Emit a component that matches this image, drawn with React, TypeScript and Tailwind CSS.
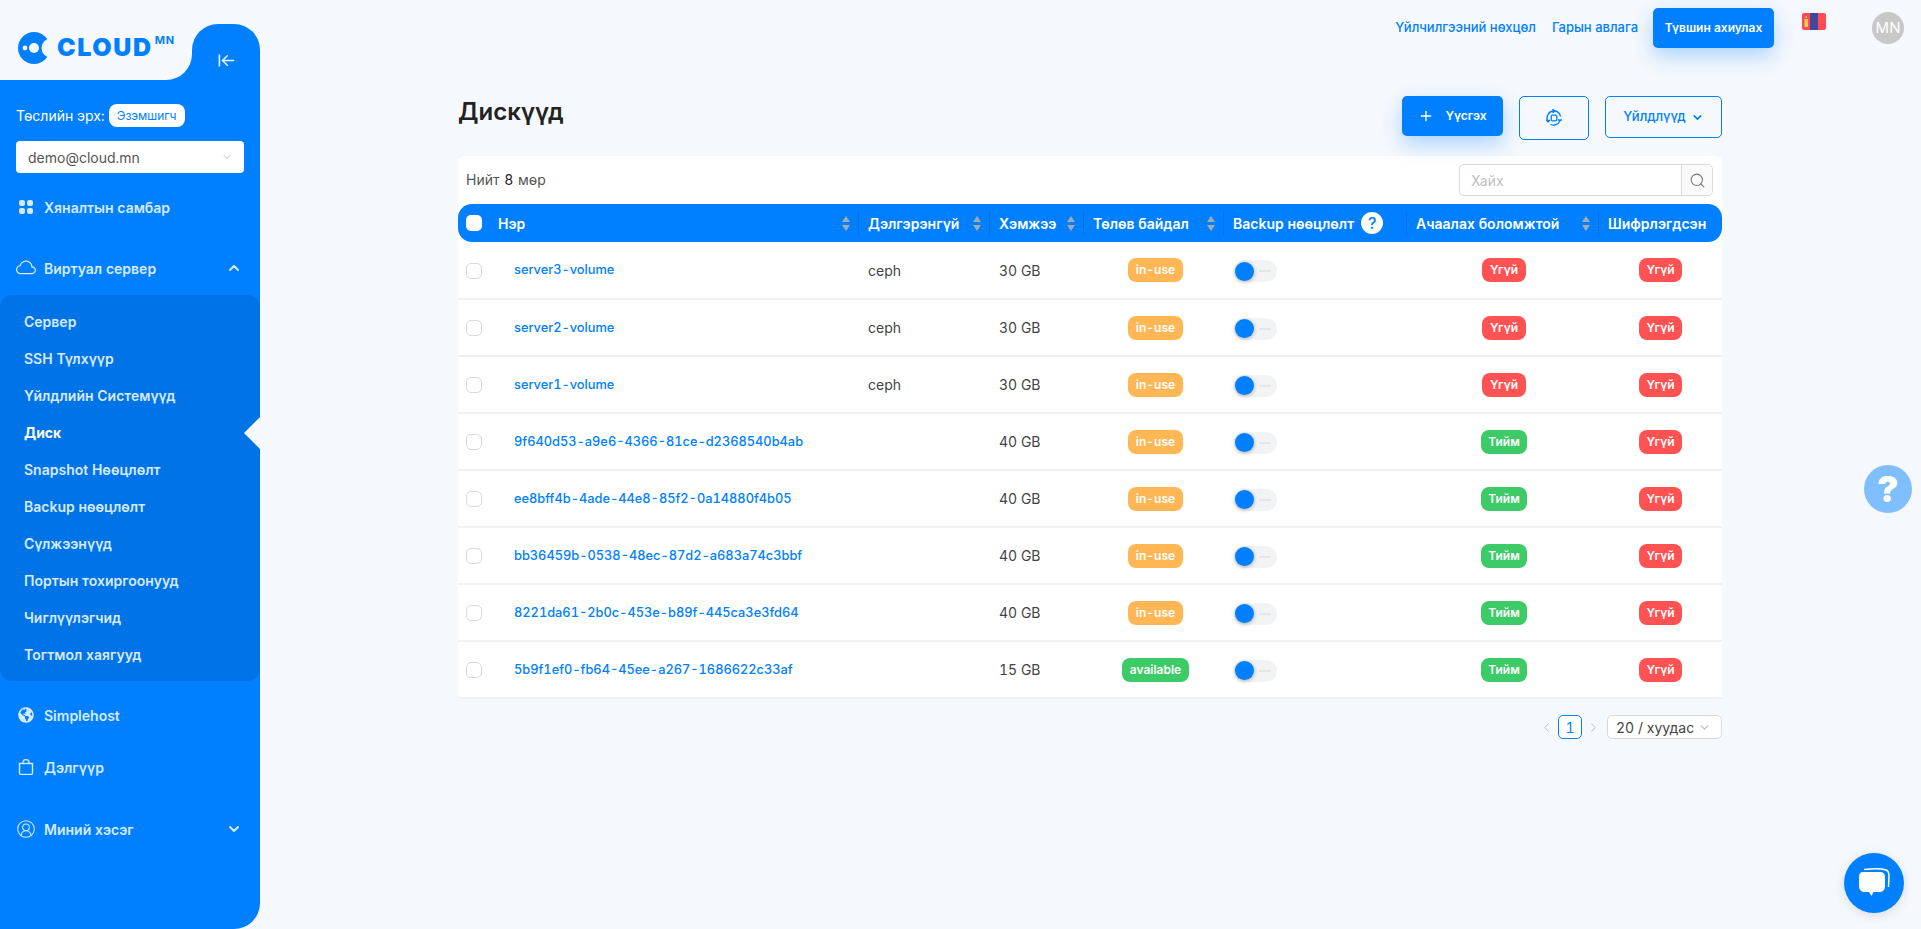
import { ArrowLeftToLine, ChevronDown, ChevronLeft, ChevronRight, ChevronUp, CircleUserRound, Plus, Search } from "lucide-react";
import { BsBag, BsCloud } from "react-icons/bs";
import { FaGlobeAmericas } from "react-icons/fa";

const subItems = [
  "Сервер",
  "SSH Түлхүүр",
  "Үйлдлийн Системүүд",
  "Диск",
  "Snapshot Нөөцлөлт",
  "Backup нөөцлөлт",
  "Сүлжээнүүд",
  "Портын тохиргоонууд",
  "Чиглүүлэгчид",
  "Тогтмол хаягууд",
];

const rows = [
  { name: "server3-volume", desc: "ceph", size: "30 GB", status: "in-use", boot: false },
  { name: "server2-volume", desc: "ceph", size: "30 GB", status: "in-use", boot: false },
  { name: "server1-volume", desc: "ceph", size: "30 GB", status: "in-use", boot: false },
  { name: "9f640d53-a9e6-4366-81ce-d2368540b4ab", desc: "", size: "40 GB", status: "in-use", boot: true },
  { name: "ee8bff4b-4ade-44e8-85f2-0a14880f4b05", desc: "", size: "40 GB", status: "in-use", boot: true },
  { name: "bb36459b-0538-48ec-87d2-a683a74c3bbf", desc: "", size: "40 GB", status: "in-use", boot: true },
  { name: "8221da61-2b0c-453e-b89f-445ca3e3fd64", desc: "", size: "40 GB", status: "in-use", boot: true },
  { name: "5b9f1ef0-fb64-45ee-a267-1686622c33af", desc: "", size: "15 GB", status: "available", boot: true },
];

function Logo() {
  return (
    <div className="flex items-start pl-[18px] pt-[8px]">
      <svg width="32" height="32" viewBox="0 0 32 32">
        <circle cx="16" cy="16" r="16" fill="#0080ff" />
        <circle cx="33" cy="16" r="9.5" fill="#f5f8fc" />
        <circle cx="16" cy="16" r="5" fill="#f5f8fc" />
        <circle cx="7" cy="16" r="2.4" fill="#f5f8fc" />
      </svg>
      <span className="ml-[7px] text-[25px] leading-[30px] font-black tracking-[1.6px] text-[#0080ff]">CLOUD</span>
      <span className="ml-[2px] mt-[2px] text-[11px] leading-[12px] font-bold tracking-[1px] text-[#0080ff]">MN</span>
    </div>
  );
}

function GridIcon() {
  return (
    <svg width="14" height="14" viewBox="0 0 14 14" fill="currentColor">
      <rect x="0" y="0" width="6" height="6" rx="2.2" />
      <rect x="8" y="0" width="6" height="6" rx="2.2" />
      <rect x="0" y="8" width="6" height="6" rx="2.2" />
      <rect x="8" y="8" width="6" height="6" rx="2.2" />
    </svg>
  );
}

function NavItem({ icon, label, chevron, className }: { icon: React.ReactNode; label: string; chevron?: "up" | "down"; className?: string }) {
  return (
    <div className={`flex h-[44px] items-center text-[14px] font-semibold text-[#d6eaff] ${className ?? ""}`}>
      <span className="flex w-[44px] justify-center pl-[16px] pr-[8px]">{icon}</span>
      <span className="flex-1">{label}</span>
      {chevron === "up" && <ChevronUp size={16} strokeWidth={3} className="mr-[18px]" />}
      {chevron === "down" && <ChevronDown size={16} strokeWidth={3} className="mr-[18px]" />}
    </div>
  );
}

function Sidebar() {
  return (
    <aside className="flex h-[929px] w-[260px] shrink-0 flex-col pt-[24px]">
      <div className="flex h-[56px]">
        <div className="w-[192px] bg-[#0080ff]">
          <div className="h-full rounded-br-[26px] bg-[#f5f8fc]">
            <Logo />
          </div>
        </div>
        <div className="flex w-[68px] justify-center rounded-t-[26px] bg-[#0080ff] pt-[27px] text-[#e6f2ff]">
          <ArrowLeftToLine size={19} strokeWidth={2} />
        </div>
      </div>
      <div className="flex flex-1 flex-col rounded-br-[26px] bg-[#0080ff]">
        <div className="mt-[24px] flex h-[23px] items-center pl-[16px] text-[14px] text-white">
          Төслийн эрх:
          <span className="ml-[4px] flex h-[23px] w-[76px] items-center justify-center rounded-[8px] bg-white text-[12px] text-[#0080ff]">Эзэмшигч</span>
        </div>
        <div className="mx-[16px] mt-[14px] flex h-[32px] items-center justify-between rounded-[4px] bg-white pl-[12px] pr-[11px] text-[14px] text-[#555]">
          demo@cloud.mn
          <ChevronDown size={12} className="text-[#bbb]" />
        </div>
        <NavItem className="mt-[12px]" icon={<GridIcon />} label="Хяналтын самбар" />
        <NavItem className="mt-[17px]" icon={<BsCloud size={20} />} label="Виртуал сервер" chevron="up" />
        <div className="relative mt-[5px] rounded-[12px] bg-[#0073e6] py-[8px]">
          {subItems.map((item) => (
            <div key={item} className={`flex h-[37px] items-center pl-[24px] text-[14px] ${item === "Диск" ? "font-bold text-white" : "font-semibold text-[#d6eaff]"}`}>
              {item}
            </div>
          ))}
          <div className="absolute right-0 top-[122px] h-0 w-0 border-y-[16px] border-r-[16px] border-y-transparent border-r-[#f5f8fc]" />
        </div>
        <NavItem className="mt-[12px]" icon={<FaGlobeAmericas size={16} />} label="Simplehost" />
        <NavItem className="mt-[8px]" icon={<BsBag size={16} stroke="currentColor" strokeWidth={0.4} />} label="Дэлгүүр" />
        <NavItem className="mt-[18px]" icon={<CircleUserRound size={20} strokeWidth={1.25} />} label="Миний хэсэг" chevron="down" />
      </div>
    </aside>
  );
}

function Flag() {
  return (
    <svg width="24" height="17" viewBox="0 0 24 17" className="mt-[5px] ml-[28px]">
      <rect width="24" height="17" rx="2" fill="#ff4b55" />
      <rect x="8" width="8" height="17" fill="#41479b" />
      <rect x="2.5" y="6" width="3.5" height="8" fill="#ffd250" />
      <rect x="3.6" y="3" width="1.3" height="2" fill="#ffd250" />
    </svg>
  );
}

function RefreshIcon() {
  return (
    <svg width="18" height="18" viewBox="0 0 18 18" fill="none" stroke="#0080ff" strokeWidth="1.3">
      <rect x="6.2" y="6.2" width="5.6" height="5.6" rx="1.4" />
      <path d="M3 12.5 A7 7 0 0 1 8 2" />
      <path d="M10 2 A7 7 0 0 1 15.5 7.5" />
      <path d="M14.8 12 A7 7 0 0 1 5.5 15.5" />
      <path d="M7.5 0.3 L10 2 L7.5 3.8" fill="#0080ff" />
      <path d="M1.4 10.8 L3 13 L5 11" fill="#0080ff" />
      <path d="M16.8 10.6 L14.6 12 L13 10.4" fill="#0080ff" />
    </svg>
  );
}

function Sort() {
  return (
    <span className="flex flex-col gap-[3px]">
      <span className="h-0 w-0 border-x-[4px] border-b-[6px] border-x-transparent border-b-[#a3a9b0]" />
      <span className="h-0 w-0 border-x-[4px] border-t-[6px] border-x-transparent border-t-[#a3a9b0]" />
    </span>
  );
}

function HeadCell({ label, sort = true, divider = true, extra, first }: { label: string; sort?: boolean; divider?: boolean; extra?: React.ReactNode; first?: boolean }) {
  return (
    <th className="p-0 text-left font-semibold">
      <div className={`flex h-[24px] items-center justify-between pr-[8px] ${first ? "pl-[8px]" : "pl-[9px]"} ${divider ? "border-r border-[#0073e6]" : ""}`}>
        <span className="flex items-center gap-[7px]">
          {label}
          {extra}
        </span>
        {sort && <Sort />}
      </div>
    </th>
  );
}

function Badge({ color, children }: { color: string; children: React.ReactNode }) {
  return <span className={`inline-flex h-[24px] items-center rounded-[8px] px-[7.5px] text-[12px] font-semibold text-white ${color}`}>{children}</span>;
}

function Toggle() {
  return (
    <div className="ml-[10px] flex h-[22px] w-[43px] items-center rounded-full bg-[#f2f3f5] pl-[1px]">
      <span className="h-[19px] w-[19px] rounded-full bg-[#0080ff] shadow-[0_1px_4px_rgba(0,0,0,0.3)]" />
      <span className="ml-[5px] h-[2px] w-[12px] bg-[#e4e5e7]" />
    </div>
  );
}

function DiskTable() {
  return (
    <table className="w-full table-fixed border-separate border-spacing-0 text-[14px]">
      <colgroup>
        <col className="w-[32px]" />
        <col className="w-[369px]" />
        <col className="w-[131px]" />
        <col className="w-[94px]" />
        <col className="w-[140px]" />
        <col className="w-[183px]" />
        <col className="w-[192px]" />
        <col className="w-[123px]" />
      </colgroup>
      <thead>
        <tr className="h-[38px] text-white">
          <th className="rounded-l-[14px] bg-[#0080ff] p-0 pl-[8px]">
            <div className="h-[16px] w-[16px] rounded-[5px] bg-white" />
          </th>
          <th colSpan={7} className="rounded-r-[14px] bg-[#0080ff] p-0">
            <table className="w-full table-fixed">
              <colgroup>
                <col className="w-[369px]" />
                <col className="w-[131px]" />
                <col className="w-[94px]" />
                <col className="w-[140px]" />
                <col className="w-[183px]" />
                <col className="w-[192px]" />
                <col className="w-[123px]" />
              </colgroup>
              <tbody>
                <tr>
                  <HeadCell label="Нэр" first />
                  <HeadCell label="Дэлгэрэнгүй" />
                  <HeadCell label="Хэмжээ" />
                  <HeadCell label="Төлөв байдал" />
                  <HeadCell
                    label="Backup нөөцлөлт"
                    sort={false}
                    extra={<span className="flex h-[22px] w-[22px] items-center justify-center rounded-full bg-white text-[16px] font-medium text-[#0080ff]">?</span>}
                  />
                  <HeadCell label="Ачаалах боломжтой" />
                  <HeadCell label="Шифрлэгдсэн" sort={false} divider={false} />
                </tr>
              </tbody>
            </table>
          </th>
        </tr>
      </thead>
      <tbody>
        {rows.map((r, i) => (
          <tr key={r.name} className={`bg-white ${i === 0 ? "h-[58px]" : "h-[57px]"}`}>
            <td className="border-b-2 border-[#f0f1f3] p-0 pl-[8px] pt-[1px]">
              <div className="h-[16px] w-[16px] rounded-[5px] border border-[#d9d9d9] bg-white" />
            </td>
            <td className="border-b-2 border-[#f0f1f3] p-0 pl-[24px] text-[12.8px] font-medium text-[#0080ff]">{r.name}</td>
            <td className="border-b-2 border-[#f0f1f3] p-0 pl-[9px] text-[#444]">{r.desc}</td>
            <td className="border-b-2 border-[#f0f1f3] p-0 pl-[9px] text-[#444]">{r.size}</td>
            <td className="border-b-2 border-[#f0f1f3] p-0 pl-[3px] text-center">
              <Badge color={r.status === "available" ? "bg-[#3ccb66]" : "bg-[#ffb755]"}>{r.status}</Badge>
            </td>
            <td className="border-b-2 border-[#f0f1f3] p-0 pt-[2px]">
              <Toggle />
            </td>
            <td className="border-b-2 border-[#f0f1f3] p-0 pl-[2px] text-center">
              {r.boot ? <Badge color="bg-[#3ccb66]">Тийм</Badge> : <Badge color="bg-[#ff5353]">Үгүй</Badge>}
            </td>
            <td className="border-b-2 border-[#f0f1f3] p-0 text-center">
              <Badge color="bg-[#ff5353]">Үгүй</Badge>
            </td>
          </tr>
        ))}
      </tbody>
    </table>
  );
}

export default function App() {
  return (
    <div className="flex h-screen overflow-hidden bg-[#f5f8fc] font-['Inter',sans-serif] tabular-nums">
      <Sidebar />

      <main className="flex-1">
        {/* top links */}
        <div className="flex h-[96px] items-start justify-end pr-[17px] pt-[8px]">
          <a className="flex h-[40px] items-center text-[13px] font-medium text-[#0080ff]">Үйлчилгээний нөхцөл</a>
          <a className="ml-[16px] flex h-[40px] items-center text-[13px] font-medium text-[#0080ff]">Гарын авлага</a>
          <button className="ml-[15px] h-[40px] w-[121px] rounded-[5px] bg-[#0080ff] text-[12px] font-semibold text-white shadow-[0_8px_20px_rgba(0,128,255,0.3)]">Түвшин ахиулах</button>
          <Flag />
          <div className="ml-[46px] mt-[4px] flex h-[32px] w-[32px] items-center justify-center rounded-full bg-[#c8c8c8] text-[15px] text-white">MN</div>
        </div>

        <div className="pl-[198px] pr-[199px]">
          {/* title + actions */}
          <div className="flex h-[60px] items-start">
            <h1 className="flex-1 text-[24px] font-semibold leading-[32px] text-[#222]">Дискүүд</h1>
            <button className="flex h-[40px] w-[101px] items-center justify-center gap-[11px] rounded-[5px] bg-[#0080ff] text-[12px] font-semibold text-white shadow-[0_8px_20px_rgba(0,128,255,0.3)]">
              <Plus size={16} />
              Үүсгэх
            </button>
            <button className="ml-[16px] flex h-[44px] w-[70px] items-center justify-center rounded-[5px] border border-[#0080ff]">
              <RefreshIcon />
            </button>
            <button className="ml-[16px] flex h-[42px] w-[117px] items-center justify-center gap-[5px] rounded-[5px] border border-[#0080ff] text-[13px] font-medium text-[#0080ff]">
              Үйлдлүүд
              <ChevronDown size={13} strokeWidth={3} />
            </button>
          </div>

          {/* table card */}
          <div className="rounded-t-[6px] bg-white">
            <div className="flex h-[48px] items-center justify-between pl-[8px] pr-[9px] text-[14px] text-[#555]">
              <span className="pb-[1px]">
                Нийт <span className="mx-[1px] text-[#222]">8</span> мөр
              </span>
              <div className="flex h-[32px] w-[254px] rounded-[5px] border border-[#d9d9d9] bg-white">
                <span className="flex flex-1 items-center pl-[11px] text-[#bfbfbf]">Хайх</span>
                <span className="flex w-[31px] items-center justify-center rounded-r-[5px] border-l border-[#d9d9d9] bg-[#fafafa] text-[#777]">
                  <Search size={17} strokeWidth={1.5} />
                </span>
              </div>
            </div>
            <DiskTable />
          </div>

          {/* pagination */}
          <div className="mt-[16px] flex items-center justify-end text-[14px] text-[#444]">
            <ChevronLeft size={15} strokeWidth={1.5} className="text-[#bbb]" />
            <span className="ml-[4px] flex h-[24px] w-[24px] items-center justify-center rounded-[5px] border border-[#0080ff] bg-white text-[#0080ff]">1</span>
            <ChevronRight size={15} strokeWidth={1.5} className="ml-[4px] text-[#bbb]" />
            <span className="ml-[6px] flex h-[24px] w-[115px] items-center justify-between rounded-[5px] border border-[#d9d9d9] bg-white pl-[8px] pr-[10px]">
              20 / хуудас
              <ChevronDown size={13} className="text-[#bbb]" />
            </span>
          </div>
        </div>
      </main>

      {/* floating help + chat */}
      <div className="fixed left-[1864px] top-[465px] flex h-[48px] w-[48px] items-center justify-center rounded-full bg-[#80bfff] text-[36px] font-black leading-none text-white">?</div>
      <div className="fixed left-[1844px] top-[853px] flex h-[60px] w-[60px] items-center justify-center rounded-full bg-[#0080ff] shadow-[0_2px_12px_rgba(0,0,0,0.12)]">
        <svg width="32" height="32" viewBox="0 0 32 32" fill="none">
          <path d="M6 2.6 C14 1.6 24 1.6 28 3 Q31 4 31 9 L30.5 20" stroke="#fff" strokeWidth="1.5" />
          <path d="M5 5 H22 Q27 5 27 10 V19 Q27 25 21 25 H15.5 L13.5 29 L11 25 H7 Q1 25 1 19 V10 Q1 5 5 5 Z" fill="#fff" />
        </svg>
      </div>
    </div>
  );
}
